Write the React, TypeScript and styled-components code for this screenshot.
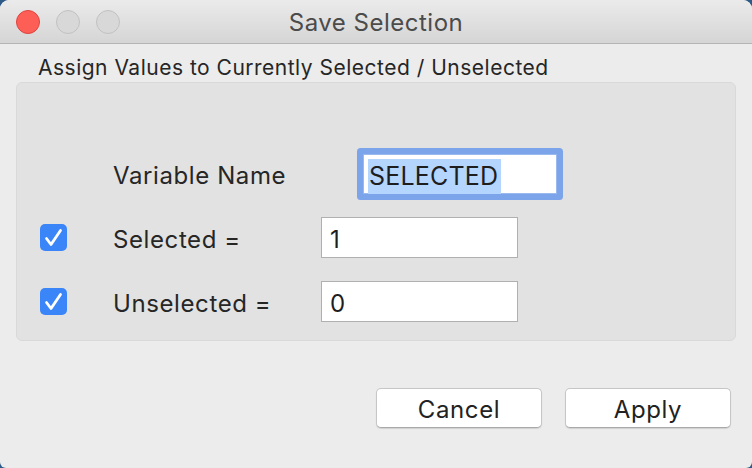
import React from 'react'
import styled, { createGlobalStyle } from 'styled-components'

const Global = createGlobalStyle`
    html, body {
        margin: 0;
        padding: 0;
        background: #2d5a86;
    }
    body {
        font-family: Inter, "Liberation Sans", Arial, sans-serif;
        color: #262626;
    }
`

const Window = styled.div`
    width: 752px;
    height: 468px;
    background: #ececec;
    border-radius: 9px 9px 6px 6px;
    overflow: hidden;
    display: flex;
    flex-direction: column;
`

const TitleBar = styled.div`
    height: 43px;
    flex-shrink: 0;
    display: grid;
    grid-template-columns: 1fr auto 1fr;
    align-items: center;
    background: linear-gradient(#ebebeb, #d5d5d5);
    border-bottom: 1px solid #b4b4b4;
`

const Lights = styled.div`
    display: flex;
    gap: 16px;
    padding-left: 16px;
`

const Light = styled.span<{ $color: string; $edge: string }>`
    width: 24px;
    height: 24px;
    border-radius: 50%;
    background: ${p => p.$color};
    border: 1px solid ${p => p.$edge};
    box-sizing: border-box;
`

const Title = styled.div`
    font-size: 24px;
    color: #4b4b4b;
    letter-spacing: 0.5px;
    padding-top: 1px;
`

const Body = styled.div`
    flex: 1;
    display: flex;
    flex-direction: column;
    padding: 12px 16px 0;
`

const Caption = styled.div`
    font-size: 21px;
    letter-spacing: 0.5px;
    padding-left: 22px;
    line-height: 24px;
    margin-bottom: 2px;
`

const Group = styled.div`
    height: 259px;
    box-sizing: border-box;
    background: #e2e2e2;
    border: 1px solid #d9d9d9;
    border-radius: 6px;
    padding: 70px 0 0 23px;
    display: grid;
    grid-template-columns: 27px 162px auto;
    column-gap: 46px;
    grid-template-rows: 41px 41px 41px;
    row-gap: 23px;
    align-items: center;
`

const Label = styled.div`
    font-size: 24px;
    letter-spacing: 0.6px;
    white-space: nowrap;
    padding-top: 3px;
`

const Check = styled.span`
    width: 27px;
    height: 27px;
    border-radius: 5px;
    background: #3a85f7;
    display: flex;
`

const Field = styled.div`
    width: 197px;
    height: 41px;
    box-sizing: border-box;
    background: #fff;
    border: 1px solid #b0b0b0;
    padding: 3px 0 0 8px;
    font-size: 24px;
    display: flex;
    align-items: center;
    color: #1e1e1e;
`

const FocusField = styled(Field)`
    width: 194px;
    height: 40px;
    margin-left: 42px;
    border: 1px solid #9ab9ef;
    border-radius: 1px;
    box-shadow: 0 0 0 6px #7ca4ea;
    padding: 5px 0 0 4px;
    font-size: 25px;
`

const Selection = styled.span`
    background: #b4d5fe;
    line-height: 35px;
    padding: 0 3px 0 1px;
    letter-spacing: 0.2px;
`

const Footer = styled.div`
    display: flex;
    justify-content: flex-end;
    gap: 23px;
    padding: 47px 5px 0 0;
`

const Button = styled.button`
    width: 166px;
    height: 40px;
    background: #fff;
    border: 1px solid #c6c6c6;
    border-bottom-color: #a9a9a9;
    border-radius: 5px;
    box-shadow: 0 1px 1px rgba(0, 0, 0, 0.12);
    font-family: inherit;
    font-size: 24px;
    letter-spacing: 0.6px;
    color: #222;
    padding: 2px 0 0;
`

const Tick = () => (
    <svg width="27" height="27" viewBox="0 0 27 27">
        <path d="M6.5 14.5 L11 20.5 L20.5 6.5" fill="none" stroke="#fff" strokeWidth="2.8" strokeLinecap="round" strokeLinejoin="round" />
    </svg>
)

const App: React.FC = () => {
    return (
        <>
            <Global />
            <Window>
                <TitleBar>
                    <Lights>
                        <Light $color="#fd5f57" $edge="#e0443e" />
                        <Light $color="#d8d8d8" $edge="#c2c2c2" />
                        <Light $color="#d8d8d8" $edge="#c2c2c2" />
                    </Lights>
                    <Title>Save Selection</Title>
                    <div />
                </TitleBar>
                <Body>
                    <Caption>Assign Values to Currently Selected / Unselected</Caption>
                    <Group>
                        <span />
                        <Label>Variable Name</Label>
                        <FocusField><Selection>SELECTED</Selection></FocusField>
                        <Check><Tick /></Check>
                        <Label>Selected =</Label>
                        <Field>1</Field>
                        <Check><Tick /></Check>
                        <Label>Unselected =</Label>
                        <Field>0</Field>
                    </Group>
                    <Footer>
                        <Button>Cancel</Button>
                        <Button>Apply</Button>
                    </Footer>
                </Body>
            </Window>
        </>
    )
}

export default App
